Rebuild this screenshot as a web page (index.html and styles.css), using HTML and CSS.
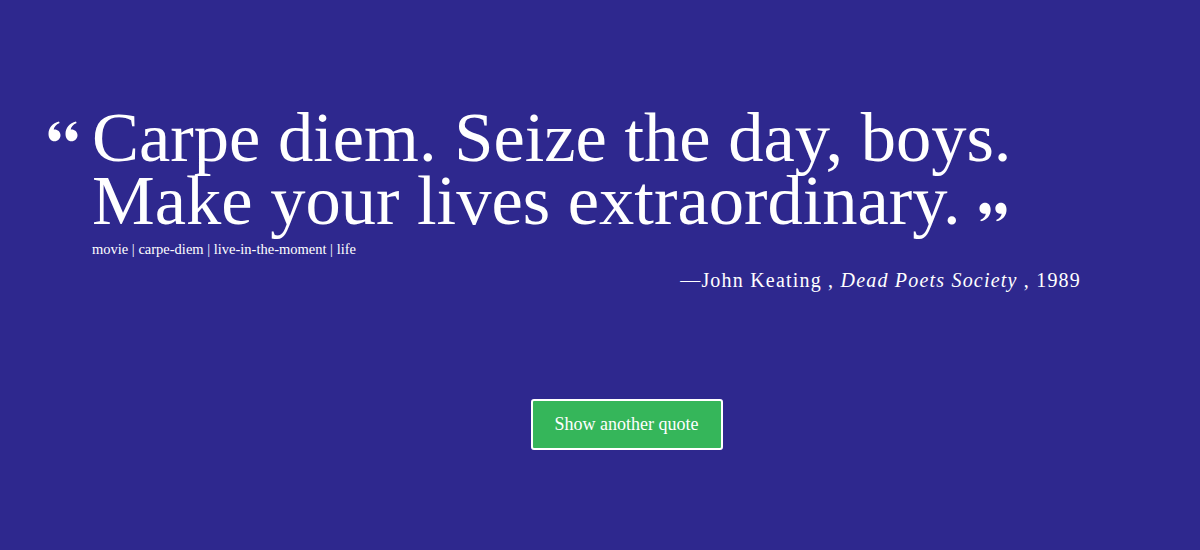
FILE: index.html
```html
<!DOCTYPE html>
<html>
<head>
<meta charset="utf-8">
<link rel="stylesheet" href="styles.css">
</head>
<body>
<main class="page">
  <section class="quote-box">
    <div class="quote-row">
      <svg class="q-open" viewBox="0 0 30 22" width="30" height="22"><path d="M6.5 8.5c3.3 0 6 2.3 6 5.8 0 3.3-2.6 6-6 6S0.5 17.5 0.5 13C0.5 7 4.5 2 11 0.5l0.6 1.5C8 3.5 6 6 5.7 8.6c0.3-0.1 0.5-0.1 0.8-0.1zM23.5 8.5c3.3 0 6 2.3 6 5.8 0 3.3-2.6 6-6 6s-6-2.8-6-7.3C17.5 7 21.5 2 28 0.5l0.6 1.5C25 3.5 23 6 22.7 8.6c0.3-0.1 0.5-0.1 0.8-0.1z" fill="#fff"/></svg>
      <div class="quote-body">
        <blockquote class="quote-text">Carpe diem. Seize the day, boys.<br>Make your lives extraordinary.<svg class="q-close" viewBox="0 0 30 22" width="28" height="21"><g transform="rotate(180 15 11)"><path d="M6.5 8.5c3.3 0 6 2.3 6 5.8 0 3.3-2.6 6-6 6S0.5 17.5 0.5 13C0.5 7 4.5 2 11 0.5l0.6 1.5C8 3.5 6 6 5.7 8.6c0.3-0.1 0.5-0.1 0.8-0.1zM23.5 8.5c3.3 0 6 2.3 6 5.8 0 3.3-2.6 6-6 6s-6-2.8-6-7.3C17.5 7 21.5 2 28 0.5l0.6 1.5C25 3.5 23 6 22.7 8.6c0.3-0.1 0.5-0.1 0.8-0.1z" fill="#fff"/></g></svg></blockquote>
        <p class="tags">movie | carpe-diem | live-in-the-moment | life</p>
      </div>
    </div>
    <p class="author">—John Keating , <em>Dead Poets Society</em> , 1989</p>
  </section>
  <div class="actions">
    <button class="btn">Show another quote</button>
  </div>
</main>
</body>
</html>
```
FILE: styles.css
```css
html, body {
  margin: 0;
  padding: 0;
  background: #2e288e;
  height: 100%;
}
body {
  font-family: "Liberation Serif", "DejaVu Serif", serif;
  color: #fff;
}
.page {
  padding-top: 106px;
}
.quote-box {
  padding: 0 119px 0 48px;
}
.quote-row {
  display: flex;
  align-items: flex-start;
}
.q-open {
  flex: none;
  margin-top: 15px;
  margin-right: 14px;
}
.quote-text {
  margin: 0;
  font-size: 70.5px;
  line-height: 63px;
  font-weight: 400;
}
.q-close {
  margin-left: 18px;
  vertical-align: 2px;
}
.tags {
  margin: 9px 0 0;
  font-size: 14.5px;
  line-height: 16px;
}
.author {
  margin: 12px 0 0;
  text-align: right;
  font-size: 20px;
  letter-spacing: 1.2px;
}
.actions {
  display: flex;
  justify-content: center;
  margin-top: 107px;
  padding-left: 53px;
}
.btn {
  font-family: inherit;
  font-size: 18px;
  color: #fff;
  background: #35b65a;
  border: 2px solid #fff;
  border-radius: 3px;
  width: 192px;
  height: 51px;
  cursor: pointer;
}
```
